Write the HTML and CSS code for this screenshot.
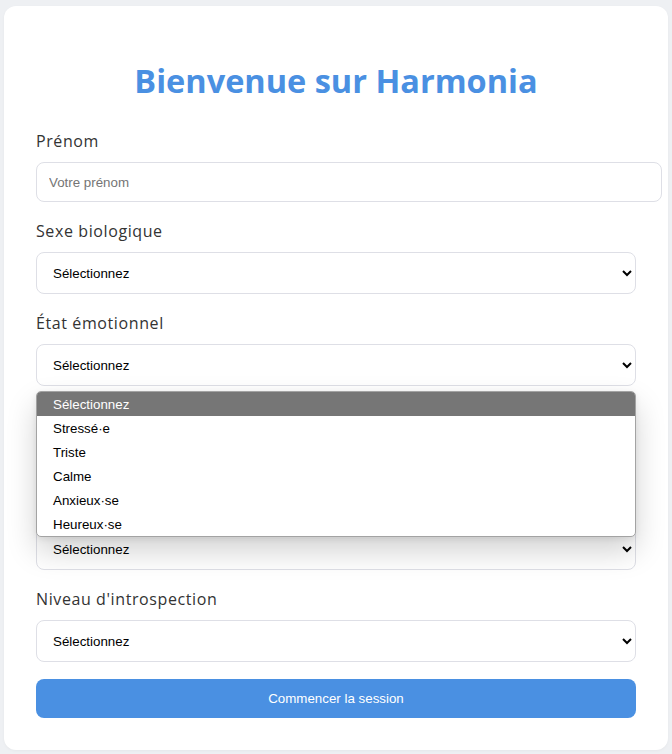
FILE: index.html
```html
<!DOCTYPE html>
<html lang="fr">
<head>
<meta charset="utf-8">
<title>Harmonia</title>
<link rel="stylesheet" href="styles.css">
</head>
<body>
<div class="card">
  <h1 class="title">Bienvenue sur Harmonia</h1>
  <form class="form">
    <div class="field">
      <label class="label">Prénom</label>
      <input class="input" type="text" placeholder="Votre prénom">
    </div>
    <div class="field">
      <label class="label">Sexe biologique</label>
      <select class="select"><option>Sélectionnez</option></select>
    </div>
    <div class="field field-open">
      <label class="label">État émotionnel</label>
      <select class="select"><option>Sélectionnez</option></select>
      <div class="dropdown">
        <div class="option option-active">Sélectionnez</div>
        <div class="option">Stressé·e</div>
        <div class="option">Triste</div>
        <div class="option">Calme</div>
        <div class="option">Anxieux·se</div>
        <div class="option">Heureux·se</div>
      </div>
    </div>
    <div class="field">
      <label class="label covered">Niveau d'énergie</label>
      <select class="select covered"><option>Sélectionnez</option></select>
    </div>
    <div class="field">
      <label class="label covered">Qualité du sommeil</label>
      <select class="select"><option>Sélectionnez</option></select>
    </div>
    <div class="field">
      <label class="label">Niveau d'introspection</label>
      <select class="select"><option>Sélectionnez</option></select>
    </div>
    <button class="button" type="button">Commencer la session</button>
  </form>
</div>
</body>
</html>
```
FILE: styles.css
```css
html, body {
  margin: 0;
  padding: 0;
}
body {
  background: #eef0f3;
  padding: 6px 4px 4px;
  font-family: "Open Sans", sans-serif;
}
.card {
  background: #ffffff;
  border-radius: 12px;
  padding: 32px;
  box-shadow: 0 1px 3px rgba(0, 0, 0, 0.04);
}
.title {
  margin: 23px 0 28px;
  font-family: "Open Sans", sans-serif;
  font-weight: 700;
  font-size: 32.5px;
  line-height: 40px;
  color: #4a90e2;
  text-align: center;
}
.form {
  display: flex;
  flex-direction: column;
}
.field {
  display: flex;
  flex-direction: column;
  margin-bottom: 17px;
}
.field-open {
  position: relative;
  z-index: 2;
}
.label {
  display: block;
  font-size: 16px;
  line-height: 24px;
  letter-spacing: 0.6px;
  color: #333333;
  margin-bottom: 9px;
}
.covered {
  visibility: hidden;
}
.input {
  width: 100%;
  height: 14px;
  padding: 12px;
  border: 1px solid #dedfe6;
  border-radius: 8px;
  font-family: "Liberation Sans", Arial, sans-serif;
  font-size: 13.333px;
  color: #000;
  background: #fff;
  outline: none;
}
.input::placeholder {
  color: #757575;
}
.select {
  width: 100%;
  height: 42px;
  padding: 0 8px 0 12px;
  border: 1px solid #dedfe6;
  border-radius: 8px;
  font-family: "Liberation Sans", Arial, sans-serif;
  font-size: 13.333px;
  color: #000;
  background: #fff;
}
.dropdown {
  position: absolute;
  left: 0;
  right: 0;
  top: calc(100% + 5px);
  background: #fff;
  border: 1px solid #a3a3a3;
  border-radius: 5px;
  overflow: hidden;
  box-shadow: 0 14px 30px rgba(0, 0, 0, 0.18), 0 2px 6px rgba(0, 0, 0, 0.08);
  font-family: "Liberation Sans", Arial, sans-serif;
  font-size: 13.333px;
}
.option {
  height: 23px;
  padding-top: 1px;
  line-height: 23px;
  padding-left: 16px;
  color: #000;
}
.option-active {
  background: #767676;
  color: #fff;
}
.button {
  width: 100%;
  padding: 12px;
  border: none;
  border-radius: 8px;
  background: #4a90e2;
  color: #fff;
  font-family: "Liberation Sans", Arial, sans-serif;
  font-size: 13.333px;
  line-height: 15px;
  cursor: pointer;
}
```
